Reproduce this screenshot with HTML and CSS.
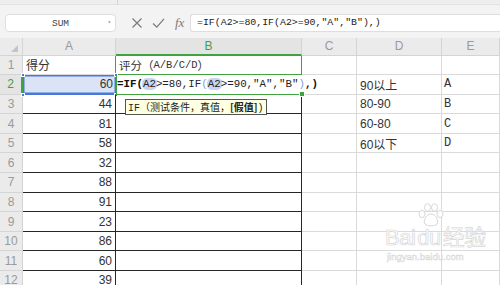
FILE: index.html
```html
<!DOCTYPE html>
<html lang="zh-CN">
<head>
    <meta charset="UTF-8">
    <title>WPS 表格 - IF 函数</title>
    <link rel="stylesheet" href="styles.css">
</head>
<body>
    <div class="app">
        <div class="topstrip"><span class="mark"></span></div>

        <div class="fbar">
            <div class="namebox"><span>SUM</span><span class="caret">▾</span></div>
            <div class="ficons">
                <svg width="12" height="12" viewBox="0 0 12 12"><path d="M1.5 1.5 L10.5 10.5 M10.5 1.5 L1.5 10.5" stroke="#7a7a7a" stroke-width="1.2" fill="none"/></svg>
                <svg width="13" height="12" viewBox="0 0 13 12"><path d="M1 6.5 L4.8 10.2 L12 1.8" stroke="#7a7a7a" stroke-width="1.2" fill="none"/></svg>
                <span class="fx">fx</span>
            </div>
            <div class="finput">=IF(A2&gt;=80,IF(A2&gt;=90,"A","B"),)</div>
        </div>

        <div class="sheet">
            <!-- header -->
            <div class="corner"><span class="tri"></span></div>
            <div class="ch">A</div>
            <div class="ch active">B</div>
            <div class="ch">C</div>
            <div class="ch">D</div>
            <div class="ch">E</div>

            <!-- row 1 -->
            <div class="rh">1</div>
            <div class="cell txt green-r">得分</div>
            <div class="cell txt b1"><span class="cn">评分（</span><span class="mono">A/B/C/D</span><span class="cn">）</span></div>
            <div class="cell"></div>
            <div class="cell"></div>
            <div class="cell"></div>

            <!-- row 2 -->
            <div class="rh active">2</div>
            <div class="cell num sel">60
                <span class="hd tl"></span><span class="hd tr"></span><span class="hd bl"></span><span class="hd br"></span>
            </div>
            <div class="cell edit"><span class="b">=IF(</span><span class="ref">A2</span>&gt;=80,IF<span class="lp">(</span><span class="ref">A2</span>&gt;=90,"A","B"<span class="lp">)</span><span class="b">,)</span><span class="fill"></span></div>
            <div class="cell"></div>
            <div class="cell txt">90以上</div>
            <div class="cell txt mono">A</div>

            <!-- row 3 -->
            <div class="rh">3</div>
            <div class="cell num dark">44</div>
            <div class="cell dark"></div>
            <div class="cell"></div>
            <div class="cell txt">80-90</div>
            <div class="cell txt mono">B</div>

            <div class="rh">4</div>
            <div class="cell num dark">81</div>
            <div class="cell dark"></div>
            <div class="cell"></div>
            <div class="cell txt">60-80</div>
            <div class="cell txt mono">C</div>

            <div class="rh">5</div>
            <div class="cell num dark">58</div>
            <div class="cell dark"></div>
            <div class="cell"></div>
            <div class="cell txt">60以下</div>
            <div class="cell txt mono">D</div>

            <div class="rh">6</div>
            <div class="cell num dark">32</div>
            <div class="cell dark"></div>
            <div class="cell"></div><div class="cell"></div><div class="cell"></div>

            <div class="rh">7</div>
            <div class="cell num dark">88</div>
            <div class="cell dark"></div>
            <div class="cell"></div><div class="cell"></div><div class="cell"></div>

            <div class="rh">8</div>
            <div class="cell num dark">91</div>
            <div class="cell dark"></div>
            <div class="cell"></div><div class="cell"></div><div class="cell"></div>

            <div class="rh">9</div>
            <div class="cell num dark">23</div>
            <div class="cell dark"></div>
            <div class="cell"></div><div class="cell"></div><div class="cell"></div>

            <div class="rh">10</div>
            <div class="cell num dark">86</div>
            <div class="cell dark"></div>
            <div class="cell"></div><div class="cell"></div><div class="cell"></div>

            <div class="rh">11</div>
            <div class="cell num dark">60</div>
            <div class="cell dark"></div>
            <div class="cell"></div><div class="cell"></div><div class="cell"></div>

            <div class="rh">12</div>
            <div class="cell num dark">39</div>
            <div class="cell dark"></div>
            <div class="cell"></div><div class="cell"></div><div class="cell"></div>
        </div>

        <!-- function hint -->
        <div class="tip"><span class="mono">IF</span>（测试条件，真值，<b>[假值]</b><span class="mono">)</span></div>

        <!-- watermark -->
        <div class="watermark">
            <svg class="paw" width="28" height="26" viewBox="0 0 28 26">
                <g fill="#fff" stroke="#d8d8d8" stroke-width="1">
                    <ellipse cx="5" cy="12" rx="3" ry="3.6"/>
                    <ellipse cx="10.5" cy="5.5" rx="3" ry="3.8"/>
                    <ellipse cx="17.5" cy="5.5" rx="3" ry="3.8"/>
                    <ellipse cx="23" cy="12" rx="3" ry="3.6"/>
                    <path d="M14 12 C9 12 6 19 8 22 C10 24.5 18 24.5 20 22 C22 19 19 12 14 12 Z"/>
                </g>
            </svg>
            <div class="wm-big">Bai<span class="du">du</span>经验</div>
            <div class="wm-small">jingyan.baidu.com</div>
        </div>
    </div>
</body>
</html>
```

FILE: styles.css
```css
body {
    margin: 0;
    background: #f3f3f3;
    font-family: "Liberation Sans", Arial, "Noto Sans CJK SC", sans-serif;
    color: #333;
}
.app {
    position: relative;
    width: 500px;
    height: 285px;
    overflow: hidden;
    background: #f3f3f3;
}
.topstrip {
    height: 5px;
    background: #eeeeee;
    border-bottom: 1px solid #e2e2e2;
    box-sizing: border-box;
    position: relative;
}
.mark {
    position: absolute;
    left: 117px;
    top: 0;
    width: 1px;
    height: 5px;
    background: #d6d6d6;
}

/* formula bar */
.fbar {
    height: 33px;
    display: flex;
    align-items: flex-start;
    padding: 9px 0 0 5px;
    box-sizing: border-box;
}
.namebox {
    width: 111px;
    height: 18px;
    box-sizing: border-box;
    background: #fff;
    border: 1px solid #dedede;
    border-radius: 4px;
    display: flex;
    align-items: center;
    justify-content: center;
    position: relative;
    font-family: "Liberation Mono", monospace;
    font-size: 9.5px;
    color: #444;
}
.caret {
    position: absolute;
    right: 4px;
    top: 3px;
    font-size: 6px;
    color: #999;
}
.ficons {
    width: 74px;
    height: 18px;
    display: flex;
    align-items: center;
    gap: 9px;
    padding-left: 15px;
    box-sizing: border-box;
}
.fx {
    font-family: "Liberation Serif", serif;
    font-style: italic;
    font-size: 13px;
    color: #7a7a7a;
    margin-left: 1px;
}
.finput {
    flex: 1;
    height: 18px;
    box-sizing: border-box;
    background: #fff;
    border: 1px solid #dedede;
    border-right: none;
    border-radius: 3px 0 0 3px;
    padding-left: 6px;
    font-family: "Liberation Mono", monospace;
    font-size: 9.9px;
    line-height: 16px;
    color: #222;
    white-space: nowrap;
}

/* grid */
.sheet {
    display: grid;
    grid-template-columns: 23px 93px 186px 55px 85px 58px;
    grid-template-rows: 17.5px repeat(12, 19.6px);
    background: #fff;
    height: 247px;
    overflow: hidden;
}
.corner, .ch, .rh {
    background: #ebebeb;
    box-sizing: border-box;
    border-right: 1px solid #d4d4d4;
    border-bottom: 1px solid #d4d4d4;
    color: #9a9a9a;
    font-size: 12px;
    display: flex;
    align-items: center;
    justify-content: center;
}
.corner {
    position: relative;
}
.tri {
    position: absolute;
    right: 4px;
    bottom: 3px;
    width: 0;
    height: 0;
    border-left: 7px solid transparent;
    border-bottom: 7px solid #c4c4c4;
}
.ch.active {
    color: #3fa33f;
    background: #e4e4e4;
    border-bottom: 2px solid #3fa33f;
}
.rh.active {
    color: #3fa33f;
    background: #e4e4e4;
    border-right: 2px solid #3fa33f;
}
.cell {
    box-sizing: border-box;
    border-right: 1px solid #dadada;
    border-bottom: 1px solid #dadada;
    font-size: 12px;
    display: flex;
    align-items: center;
    white-space: nowrap;
    position: relative;
}
.txt {
    padding-left: 3px;
    font-family: "Liberation Sans", "Noto Sans CJK SC", sans-serif;
}
.num {
    justify-content: flex-end;
    padding-right: 3px;
}
.mono {
    font-family: "Liberation Mono", monospace;
    font-size: 10.5px;
}
.cell.mono {
    font-size: 12px;
    padding-left: 2px;
}
.cn {
    font-family: "Noto Sans CJK SC", sans-serif;
    font-size: 11.5px;
}
.dark {
    border-right-color: #262626;
    border-bottom-color: #262626;
}
.green-r {
    border-right-color: #3fa33f;
}
.b1 {
    border-right-color: #3fa33f;
    border-bottom-color: #3fa33f;
}

/* selected A2 */
.sel {
    background: #dbe3f6;
    border: none;
    box-shadow: inset 0 0 0 1.5px #4a78d8;
    border-bottom: 1px solid #4a78d8;
}
.hd {
    position: absolute;
    width: 4px;
    height: 4px;
    background: #4a78d8;
    border: 1px solid #fff;
    box-sizing: border-box;
}
.tl { left: -2px; top: -2px; }
.tr { right: -2px; top: -2px; }
.bl { left: -2px; bottom: -3px; }
.br { right: -2px; bottom: -3px; }

/* editing B2 */
.edit {
    border-right: none;
    border-bottom: 1.5px solid #3fa33f;
    box-shadow: inset 1px 0 0 #3fa33f;
    overflow: visible;
    z-index: 2;
    padding-left: 1px;
    font-family: "Liberation Mono", monospace;
    font-size: 10.8px;
    color: #222;
}
.edit .b {
    font-weight: bold;
    color: #111;
}
.edit .ref {
    background: #c8d5f0;
    border-radius: 5px;
    padding: 0 1px;
    margin: 0 -1px;
}
.edit .lp {
    color: #7d9fe0;
}
.fill {
    position: absolute;
    right: -3px;
    bottom: -3px;
    width: 4px;
    height: 4px;
    background: #3fa33f;
    border: 1px solid #fff;
}

/* hint tooltip */
.tip {
    position: absolute;
    left: 125px;
    top: 99px;
    height: 16px;
    padding: 0 2px;
    background: #ffffe1;
    border: 1px solid #555;
    box-sizing: border-box;
    font-family: "Noto Sans CJK SC", sans-serif;
    font-size: 10px;
    line-height: 14px;
    color: #222;
    white-space: nowrap;
    z-index: 3;
}
.tip .mono {
    font-size: 10px;
}
.tip b {
    font-weight: bold;
}

/* watermark */
.watermark {
    position: absolute;
    left: 385px;
    top: 202px;
    width: 100px;
    color: #fff;
    z-index: 4;
}
.paw {
    position: absolute;
    left: 32px;
    top: 0;
}
.wm-big {
    position: absolute;
    left: 0;
    top: 25px;
    font-family: "Liberation Sans", "Noto Sans CJK SC", sans-serif;
    font-size: 22px;
    line-height: 22px;
    color: #fff;
    -webkit-text-stroke: 0.7px #d6d6d6;
    white-space: nowrap;
    letter-spacing: -0.5px;
}
.du {
    margin: 0 2px;
}
.wm-small {
    position: absolute;
    left: 2px;
    top: 50px;
    font-size: 9.5px;
    line-height: 10px;
    color: #fff;
    -webkit-text-stroke: 0.5px #d6d6d6;
    white-space: nowrap;
}
```
